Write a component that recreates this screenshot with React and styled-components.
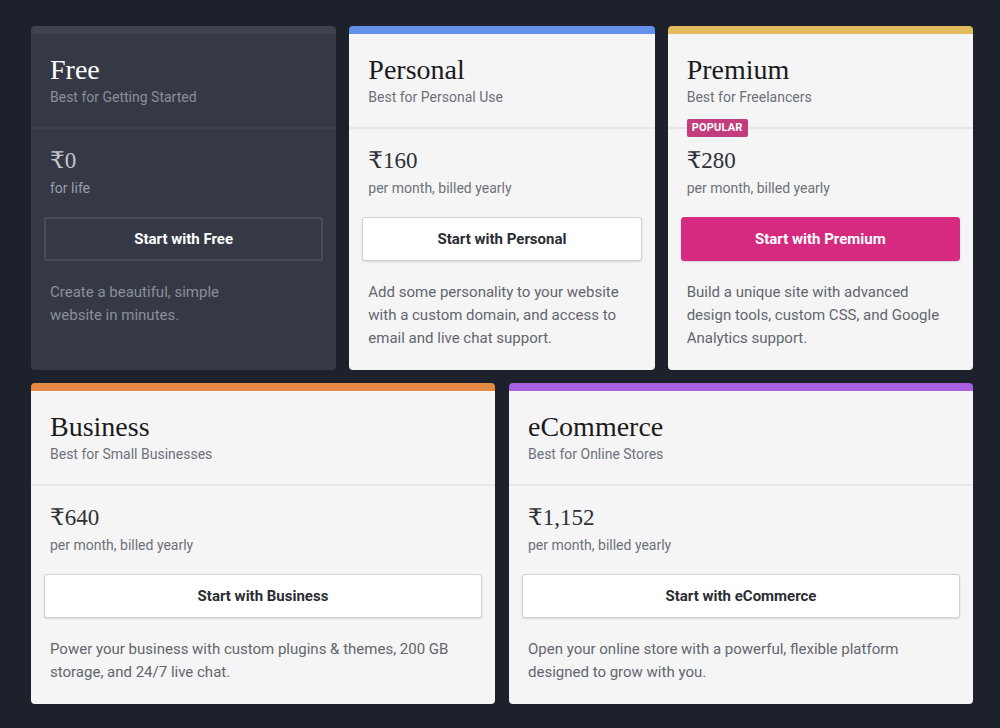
import React from "react";
import styled, { createGlobalStyle } from "styled-components";

const GlobalStyle = createGlobalStyle`
  body {
    margin: 0;
    background: #1c212b;
    font-family: Roboto, "Liberation Sans", sans-serif;
  }
`;

const plans = [
  {
    name: "Free",
    tagline: "Best for Getting Started",
    price: "₹0",
    period: "for life",
    cta: "Start with Free",
    text: ["Create a beautiful, simple", "website in minutes."],
    accent: "#3f434e",
    dark: true,
  },
  {
    name: "Personal",
    tagline: "Best for Personal Use",
    price: "₹160",
    period: "per month, billed yearly",
    cta: "Start with Personal",
    text: ["Add some personality to your website with a custom domain, and access to email and live chat support."],
    accent: "#6391ea",
  },
  {
    name: "Premium",
    tagline: "Best for Freelancers",
    price: "₹280",
    period: "per month, billed yearly",
    cta: "Start with Premium",
    text: ["Build a unique site with advanced design tools, custom CSS, and Google Analytics support."],
    accent: "#e1ba5c",
    popular: true,
  },
  {
    name: "Business",
    tagline: "Best for Small Businesses",
    price: "₹640",
    period: "per month, billed yearly",
    cta: "Start with Business",
    text: ["Power your business with custom plugins & themes, 200 GB storage, and 24/7 live chat."],
    accent: "#e48a45",
  },
  {
    name: "eCommerce",
    tagline: "Best for Online Stores",
    price: "₹1,152",
    period: "per month, billed yearly",
    cta: "Start with eCommerce",
    text: ["Open your online store with a powerful, flexible platform designed to grow with you."],
    accent: "#a85fe0",
  },
];

const PlanCard = ({ plan }) => (
  <Card $accent={plan.accent} $dark={plan.dark}>
    <Header $dark={plan.dark}>
      <Title $dark={plan.dark}>{plan.name}</Title>
      <Tagline $dark={plan.dark}>{plan.tagline}</Tagline>
      {plan.popular && <Badge>POPULAR</Badge>}
    </Header>
    <Body>
      <Price $dark={plan.dark}>{plan.price}</Price>
      <Period $dark={plan.dark}>{plan.period}</Period>
      <Button $dark={plan.dark} $primary={plan.popular}>
        {plan.cta}
      </Button>
      <Description $dark={plan.dark}>
        {plan.text.map((line, i) => (
          <React.Fragment key={i}>
            {line}
            {i < plan.text.length - 1 && <br />}
          </React.Fragment>
        ))}
      </Description>
    </Body>
  </Card>
);

const App = () => {
  return (
    <>
      <GlobalStyle />
      <Wrapper>
        <Row $cols={3}>
          {plans.slice(0, 3).map((p) => (
            <PlanCard key={p.name} plan={p} />
          ))}
        </Row>
        <Row $cols={2}>
          {plans.slice(3).map((p) => (
            <PlanCard key={p.name} plan={p} />
          ))}
        </Row>
      </Wrapper>
    </>
  );
};

export default App;

const Wrapper = styled.div`
  width: 942px;
  margin: 26px 0 0 31px;
  display: flex;
  flex-direction: column;
  gap: 13px;
`;

const Row = styled.div`
  display: grid;
  grid-template-columns: repeat(${(p) => p.$cols}, 1fr);
  column-gap: ${(p) => (p.$cols === 3 ? "13px" : "14px")};
`;

const Card = styled.div`
  background: ${(p) => (p.$dark ? "#353945" : "#f5f5f5")};
  border-top: 8px solid ${(p) => p.$accent};
  border-radius: 4px;
  display: flex;
  flex-direction: column;
`;

const Header = styled.div`
  position: relative;
  padding: 20px 19px 20px;
  border-bottom: 2px solid ${(p) => (p.$dark ? "#3c404b" : "#e8e8e8")};
`;

const Title = styled.h2`
  margin: 0;
  font-family: "Liberation Serif", serif;
  font-weight: 400;
  font-size: 28px;
  line-height: 32px;
  color: ${(p) => (p.$dark ? "#ffffff" : "#1b1b1d")};
`;

const Tagline = styled.div`
  margin-top: 1px;
  font-size: 14px;
  line-height: 20px;
  color: ${(p) => (p.$dark ? "#8b8f9a" : "#6d717b")};
`;

const Badge = styled.span`
  position: absolute;
  left: 19px;
  bottom: -10px;
  height: 18px;
  padding: 0 5px;
  background: #c23c7e;
  border-radius: 2px;
  color: #ffffff;
  font-size: 11px;
  font-weight: 700;
  line-height: 18px;
  letter-spacing: 0.2px;
`;

const Body = styled.div`
  padding: 18px 13px 20px;
  display: flex;
  flex-direction: column;
`;

const Price = styled.div`
  padding: 0 6px;
  font-family: "Liberation Serif", "DejaVu Serif", serif;
  font-size: 23px;
  line-height: 28px;
  color: ${(p) => (p.$dark ? "#c3c6ce" : "#2e3037")};
`;

const Period = styled.div`
  margin-top: 3px;
  padding: 0 6px;
  font-size: 14px;
  line-height: 20px;
  color: ${(p) => (p.$dark ? "#9a9ea8" : "#6d717b")};
`;

const Button = styled.button`
  margin-top: 19px;
  height: 44px;
  border-radius: 3px;
  font-family: Roboto, "Liberation Sans", sans-serif;
  font-size: 15px;
  font-weight: 700;
  cursor: pointer;
  background: ${(p) =>
    p.$primary ? "#d52a7f" : p.$dark ? "transparent" : "#ffffff"};
  color: ${(p) => (p.$primary || p.$dark ? "#ffffff" : "#2b2d33")};
  border: ${(p) =>
    p.$primary
      ? "1px solid #d52a7f"
      : p.$dark
      ? "2px solid #494d58"
      : "1px solid #d2d2d2"};
  box-shadow: ${(p) => (p.$dark ? "none" : "0 1px 2px rgba(0, 0, 0, 0.12)")};
`;

const Description = styled.p`
  margin: 20px 0 0;
  padding: 0 6px;
  font-size: 15px;
  line-height: 23px;
  color: ${(p) => (p.$dark ? "#8b8f9a" : "#62666f")};
`;
